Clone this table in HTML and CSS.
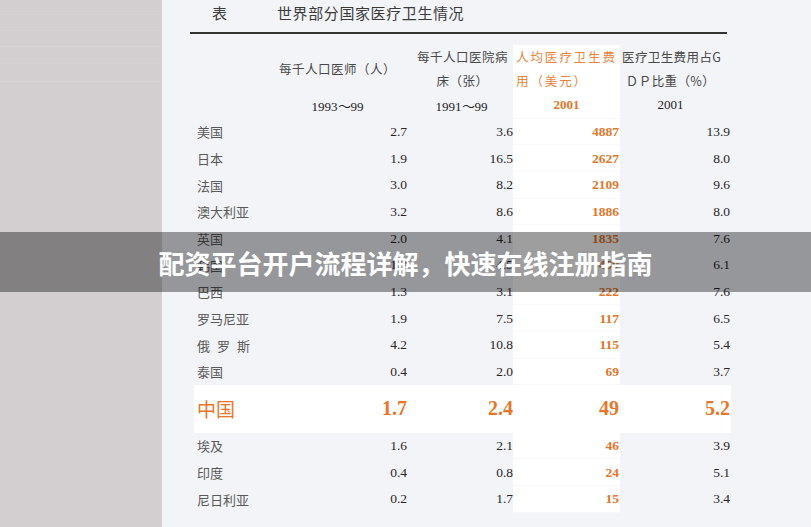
FILE: index.html
```html
<!DOCTYPE html>
<html lang="zh-CN">
<head>
<meta charset="utf-8">
<title>世界部分国家医疗卫生情况</title>
<link rel="stylesheet" href="styles.css">
</head>
<body>
<div class="screen">
  <aside class="binder">
    <div class="strip s1"></div>
    <div class="strip s2"></div>
    <div class="strip s3"></div>
    <div class="strip s4"></div>
    <div class="strip s5"></div>
  </aside>
  <main class="sheet">
    <div class="title"><span class="t-label">表</span><span class="t-name">世界部分国家医疗卫生情况</span></div>
    <div class="rule"></div>
    <div class="table">
      <div class="h h0"></div>
      <div class="h h1">每千人口医师（人）</div>
      <div class="h h2">每千人口医院病<br>床（张）</div>
      <div class="h h3">人均医疗卫生费<br>用（美元）</div>
      <div class="h h4"><span class="l1">医疗卫生费用占G</span><span class="l2">ＤＰ比重（%）</span></div>

      <div class="c"></div>
      <div class="c yr">1993～99</div>
      <div class="c yr">1991～99</div>
      <div class="c yr hot">2001</div>
      <div class="c yr yr4">2001</div>

      <div class="c name">美国</div><div class="c num n1">2.7</div><div class="c num n2">3.6</div><div class="c num hot">4887</div><div class="c num n4">13.9</div>
      <div class="c name">日本</div><div class="c num n1">1.9</div><div class="c num n2">16.5</div><div class="c num hot">2627</div><div class="c num n4">8.0</div>
      <div class="c name">法国</div><div class="c num n1">3.0</div><div class="c num n2">8.2</div><div class="c num hot">2109</div><div class="c num n4">9.6</div>
      <div class="c name">澳大利亚</div><div class="c num n1">3.2</div><div class="c num n2">8.6</div><div class="c num hot">1886</div><div class="c num n4">8.0</div>
      <div class="c name">英国</div><div class="c num n1">2.0</div><div class="c num n2">4.1</div><div class="c num hot">1835</div><div class="c num n4">7.6</div>
      <div class="c name">韩国</div><div class="c num n1">1.3</div><div class="c num n2">4.5</div><div class="c num hot">459</div><div class="c num n4">6.1</div>
      <div class="c name">巴西</div><div class="c num n1">1.3</div><div class="c num n2">3.1</div><div class="c num hot">222</div><div class="c num n4">7.6</div>
      <div class="c name">罗马尼亚</div><div class="c num n1">1.9</div><div class="c num n2">7.5</div><div class="c num hot">117</div><div class="c num n4">6.5</div>
      <div class="c name spread">俄罗斯</div><div class="c num n1">4.2</div><div class="c num n2">10.8</div><div class="c num hot">115</div><div class="c num n4">5.4</div>
      <div class="c name">泰国</div><div class="c num n1">0.4</div><div class="c num n2">2.0</div><div class="c num hot">69</div><div class="c num n4">3.7</div>

      <div class="c name cn cn-first">中国</div><div class="c num n1 cn">1.7</div><div class="c num n2 cn">2.4</div><div class="c num hot cn">49</div><div class="c num n4 cn">5.2</div>

      <div class="c name">埃及</div><div class="c num n1">1.6</div><div class="c num n2">2.1</div><div class="c num hot">46</div><div class="c num n4">3.9</div>
      <div class="c name">印度</div><div class="c num n1">0.4</div><div class="c num n2">0.8</div><div class="c num hot">24</div><div class="c num n4">5.1</div>
      <div class="c name">尼日利亚</div><div class="c num n1">0.2</div><div class="c num n2">1.7</div><div class="c num hot">15</div><div class="c num n4">3.4</div>
    </div>
  </main>
  <div class="banner">配资平台开户流程详解，快速在线注册指南</div>
</div>
</body>
</html>
```

FILE: styles.css
```css
html, body {
  margin: 0;
  padding: 0;
}

body {
  width: 811px;
  height: 527px;
  overflow: hidden;
  background: #f3f4f8;
}

.screen {
  position: relative;
  display: flex;
  width: 811px;
  height: 527px;
  overflow: hidden;
}

.binder {
  width: 162px;
  flex: none;
  background: #d3cfd0;
  display: flex;
  flex-direction: column;
}

.strip {
  border-bottom: 1px solid #d7d3d4;
}
.s1 { height: 11px; }
.s2 { height: 15px; }
.s3 { height: 18px; }
.s4 { height: 16px; }
.s5 { height: 17px; }

.sheet {
  flex: 1;
  background: #f3f4f8;
  padding-left: 28px;
}

.title {
  height: 24px;
  display: flex;
  align-items: center;
  font-family: "Noto Sans CJK SC", sans-serif;
  font-size: 15px;
  color: #3a3a3a;
  padding-left: 22px;
}

.t-label {
  width: 65px;
}

.t-name {
  letter-spacing: 0.6px;
}

.rule {
  margin-top: 8px;
  width: 537px;
  height: 2px;
  background: #333333;
}

.table {
  margin-top: 11px;
  display: grid;
  grid-template-columns: 75px 145px 103px 107px 111px;
  grid-template-rows: 23.5px 23.5px 26.67px repeat(10, 26.667px) 47.33px repeat(3, 26.667px);
}

.h {
  grid-row: 1 / span 2;
  font-family: "Noto Sans CJK SC", sans-serif;
  font-size: 12.5px;
  line-height: 23.5px;
  color: #484848;
  text-align: center;
  letter-spacing: 0.5px;
  white-space: nowrap;
}

.h1 {
  display: flex;
  align-items: center;
  justify-content: center;
  padding-top: 1px;
}

.h2 {
  padding-left: 2px;
}

.h3 {
  background: #ffffff;
  color: #e8843c;
  text-align: left;
  padding-left: 3px;
  letter-spacing: 1.9px;
}

.h4 {
  display: flex;
  flex-direction: column;
  align-items: flex-start;
  letter-spacing: 0.4px;
}

.h4 .l1 {
  padding-left: 2px;
}

.h4 .l2 {
  align-self: center;
  padding-right: 10px;
}

.c {
  display: flex;
  align-items: center;
  font-family: "Liberation Serif", serif;
  font-size: 13.5px;
  color: #262626;
  white-space: nowrap;
}

.yr {
  justify-content: center;
  font-size: 13px;
  color: #222222;
}

.yr4 {
  padding-right: 10px;
}

.name {
  padding-left: 7px;
  font-family: "Noto Sans CJK SC", sans-serif;
  font-size: 13px;
  color: #595959;
}

.spread {
  letter-spacing: 7px;
}

.num {
  justify-content: flex-end;
}

.n1 { padding-right: 3px; }
.n2 { padding-right: 0; }
.n4 { padding-right: 1px; }

.hot {
  background: #ffffff;
  color: #e2762b;
  font-weight: bold;
  padding-right: 1px;
  box-shadow: inset 0 -1px 0 #f8f8fa;
}

.yr.hot {
  padding-right: 0;
  color: #e2762b;
}

.cn {
  background: #ffffff;
  color: #e8762a;
  font-size: 20px;
  font-weight: bold;
  box-shadow: none;
}

.cn-first {
  margin-left: 4px;
  padding-left: 3px;
  font-size: 19px;
  font-weight: normal;
  color: #e8762a;
}

.banner {
  position: absolute;
  left: 0;
  right: 0;
  top: 232px;
  height: 60px;
  background: rgba(0, 0, 0, 0.38);
  color: #ffffff;
  font-family: "Noto Sans CJK SC", sans-serif;
  font-weight: bold;
  font-size: 26px;
  line-height: 60px;
  text-align: center;
  padding-top: 1px;
  box-sizing: border-box;
}
```
